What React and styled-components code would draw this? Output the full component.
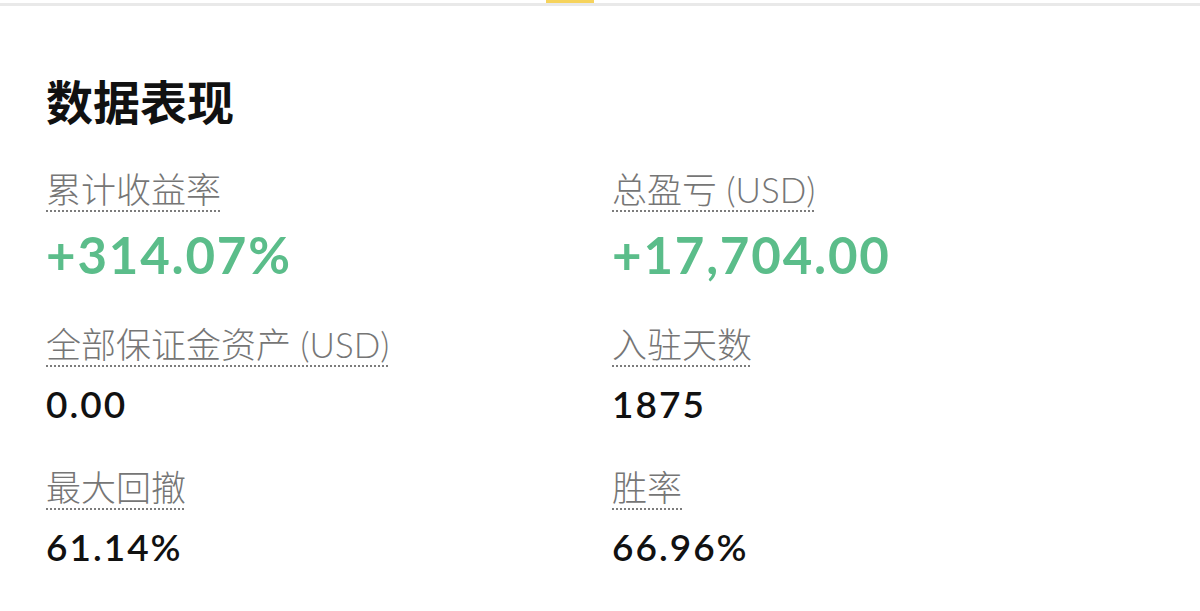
import React from 'react';
import styled, { createGlobalStyle } from 'styled-components';

const GlobalStyle = createGlobalStyle`
  html, body {
    margin: 0;
    padding: 0;
    background: #ffffff;
  }
  body {
    font-family: Lato, "Noto Sans CJK SC", sans-serif;
  }
`;

const Page = styled.div`
  width: 1200px;
  height: 611px;
  overflow: hidden;
  background: #ffffff;
`;

const TopBar = styled.div`
  display: flex;
  justify-content: center;
  height: 6px;
  border-bottom: 3px solid #e9e9e9;
  box-sizing: border-box;
`;

const ActiveTab = styled.div`
  width: 48px;
  height: 3px;
  margin-left: -60px;
  background: #f6d35c;
`;

const Section = styled.section`
  padding: 66px 0 0 46px;
`;

const Title = styled.h2`
  margin: 0 0 40px;
  font-family: "Noto Sans CJK SC", sans-serif;
  font-weight: 700;
  font-size: 47px;
  line-height: 56px;
  color: #111111;
`;

const Row = styled.div`
  display: grid;
  grid-template-columns: 566px 1fr;
  margin-bottom: ${({ $space }) => $space}px;
`;

const Stat = styled.div`
  display: flex;
  flex-direction: column;
  align-items: flex-start;
`;

const Label = styled.span`
  display: inline-block;
  font-family: Lato, "Noto Sans CJK SC", sans-serif;
  font-weight: 300;
  font-size: 35px;
  line-height: 42px;
  color: #767676;
  padding-bottom: 2px;
  background-image: linear-gradient(to right, #7c7c7c 50%, transparent 50%);
  background-size: 4px 2px;
  background-repeat: repeat-x;
  background-position: left bottom;
`;

const Value = styled.div`
  margin-top: 17px;
  font-family: Lato, "Noto Sans CJK SC", sans-serif;
  font-weight: ${({ $big }) => ($big ? 700 : 600)};
  font-size: ${({ $big }) => ($big ? 51 : 37)}px;
  line-height: ${({ $big }) => ($big ? 52 : 40)}px;
  letter-spacing: ${({ $big }) => ($big ? 1.8 : 2)}px;
  color: ${({ $green }) => ($green ? '#5bbd8a' : '#111111')};
`;

const rows = [
  {
    space: 42,
    stats: [
      { label: '累计收益率', value: '+314.07%', green: true },
      { label: '总盈亏 (USD)', value: '+17,704.00', green: true },
    ],
  },
  {
    space: 42,
    stats: [
      { label: '全部保证金资产 (USD)', value: '0.00' },
      { label: '入驻天数', value: '1875' },
    ],
  },
  {
    space: 0,
    stats: [
      { label: '最大回撤', value: '61.14%' },
      { label: '胜率', value: '66.96%' },
    ],
  },
];

const App = () => (
  <Page>
    <GlobalStyle />
    <TopBar>
      <ActiveTab />
    </TopBar>
    <Section>
      <Title>数据表现</Title>
      {rows.map((row, i) => (
        <Row key={i} $space={row.space}>
          {row.stats.map(stat => (
            <Stat key={stat.label}>
              <Label>{stat.label}</Label>
              <Value $big={stat.green} $green={stat.green}>
                {stat.value}
              </Value>
            </Stat>
          ))}
        </Row>
      ))}
    </Section>
  </Page>
);

export default App;
